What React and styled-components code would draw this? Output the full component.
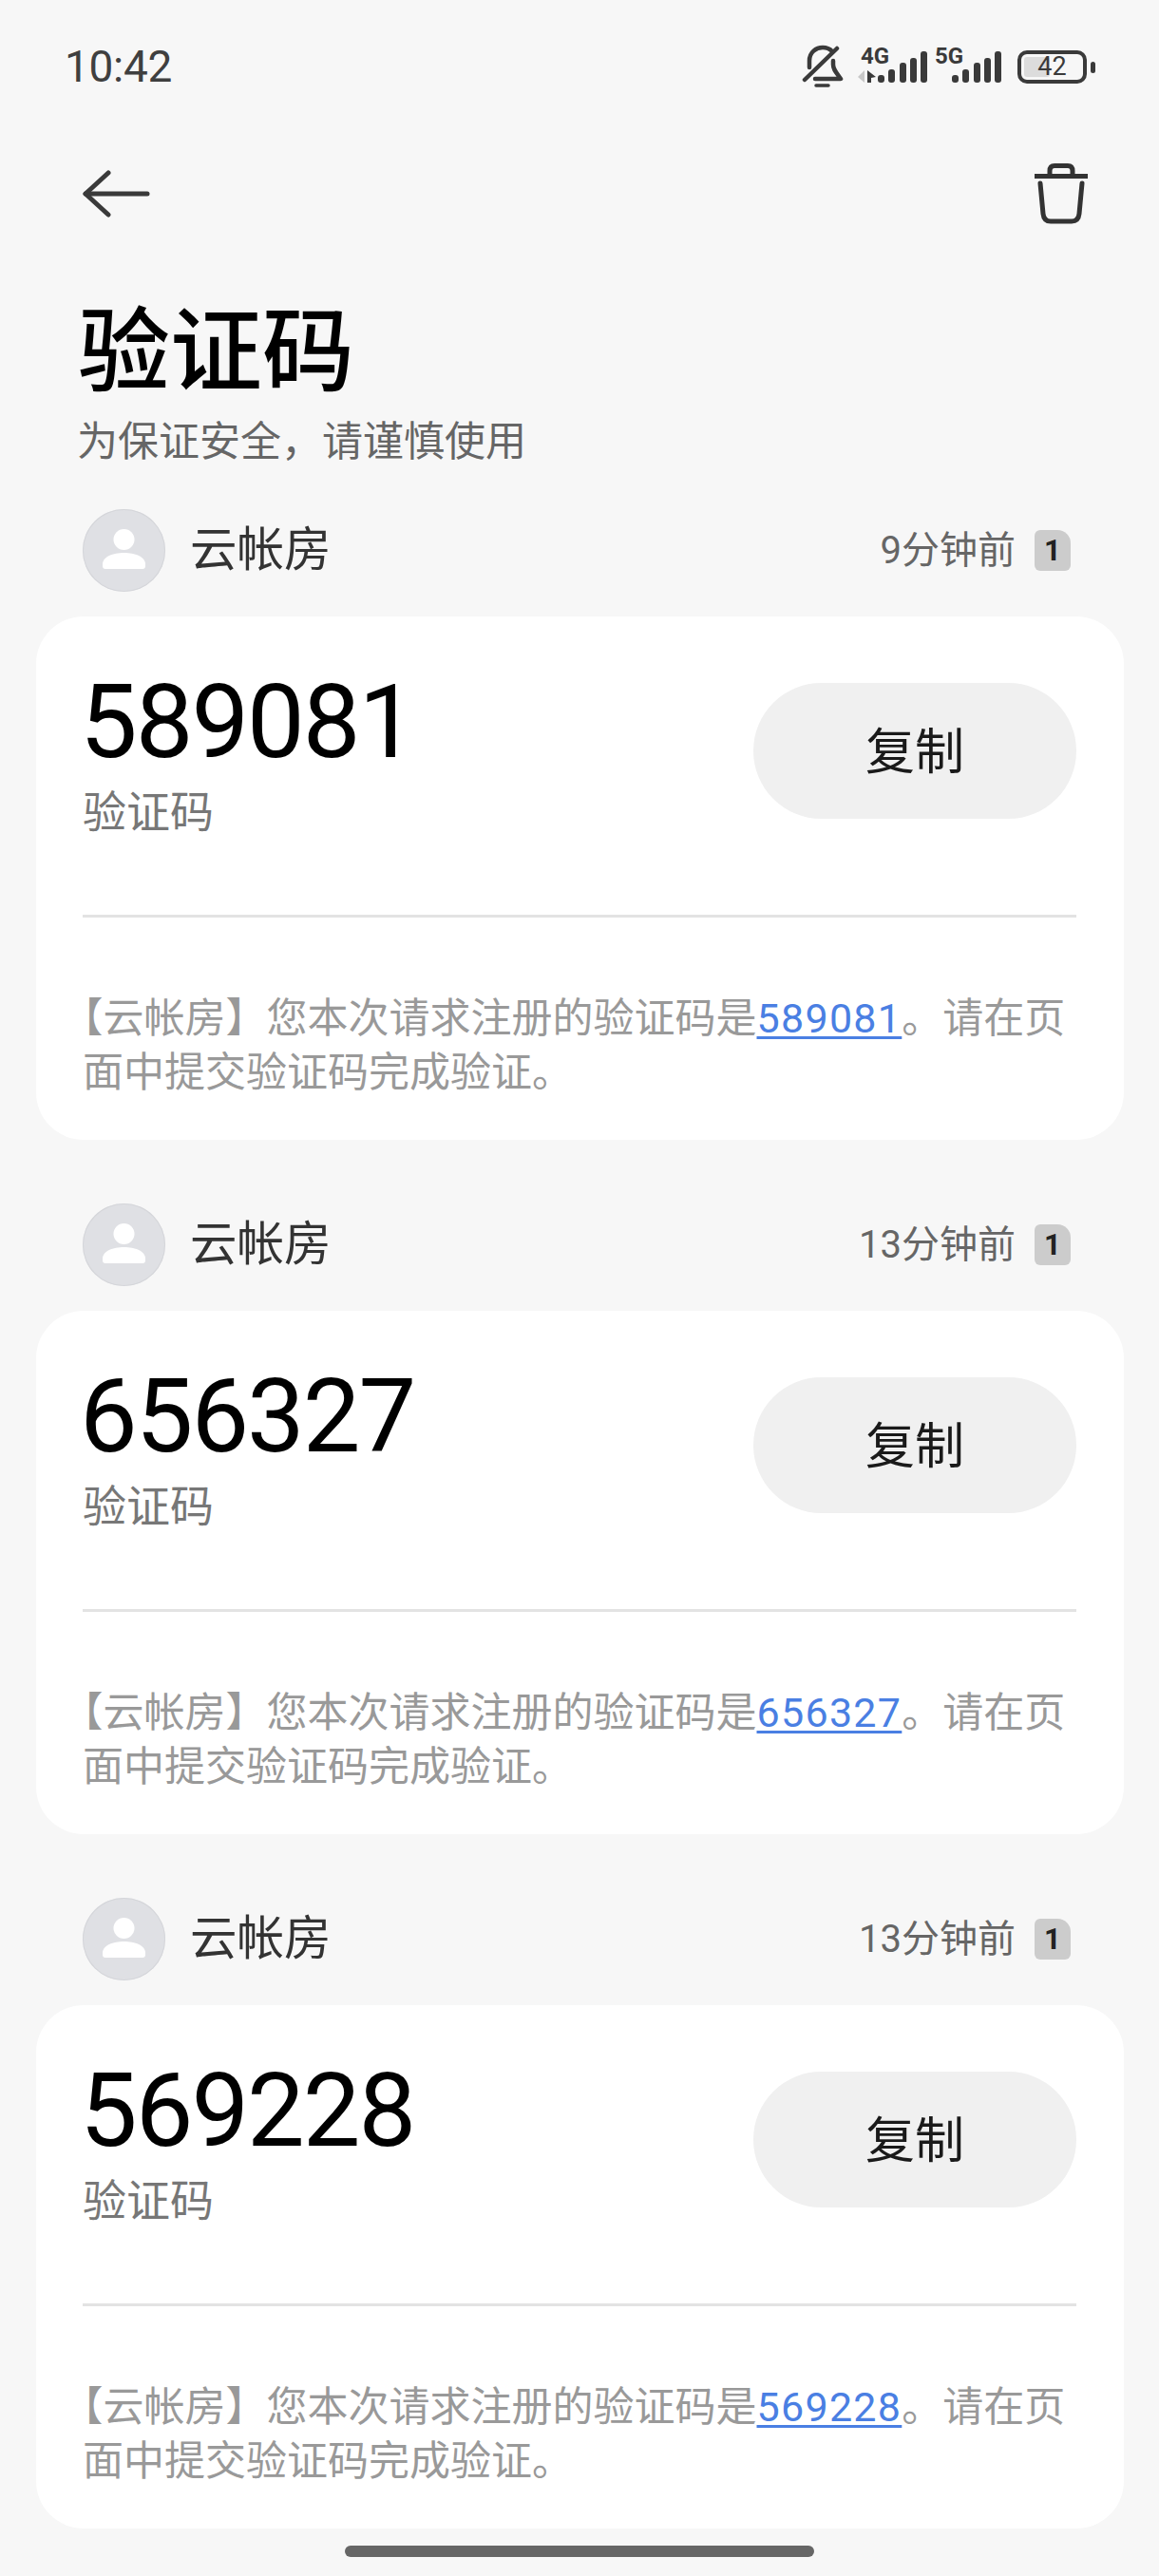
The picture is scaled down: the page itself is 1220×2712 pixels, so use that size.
import React from 'react'
import styled, { createGlobalStyle } from 'styled-components'

const GlobalStyle = createGlobalStyle`
  html, body { margin: 0; padding: 0; background: #f7f7f7; }
  body { font-family: Roboto, "Noto Sans CJK SC", sans-serif; }
`

const messages = [
  { code: '589081', time: '9分钟前' },
  { code: '656327', time: '13分钟前' },
  { code: '569228', time: '13分钟前' },
]

const BellOff = () => (
  <svg width="44" height="46" viewBox="0 0 44 46" fill="none" stroke="#3a3a3a" strokeWidth="4.5" strokeLinecap="round" strokeLinejoin="round">
    <path d="M8 24 V17 C8 8 15 3 22 3 C26 3 29 4 32 7" />
    <path d="M3 37 L37 4" />
    <path d="M33 17 V21 C33 26 36 29 41 36 H14" />
    <path d="M15 43 H28" strokeWidth="3.5" />
  </svg>
)

const Signal = ({ label, arrows }) => (
  <svg width="76" height="44" viewBox="0 0 76 44" overflow="visible">
    <text x="6" y="19" fontFamily="Roboto, sans-serif" fontWeight="700" fontSize="24" fill="#3a3a3a">{label}</text>
    {arrows && (
      <>
        <path d="M10 26 L3 33 L10 39 Z" fill="#c8c8c8" />
        <path d="M13 26 L22 33 L17 34 V39 H13 Z" fill="#3a3a3a" />
      </>
    )}
    <rect x="24" y="31" width="7" height="8" rx="3" fill="#3a3a3a" />
    <rect x="35" y="25" width="7" height="14" rx="3" fill="#3a3a3a" />
    <rect x="47" y="18" width="7" height="21" rx="3" fill="#3a3a3a" />
    <rect x="58" y="13" width="7" height="26" rx="3" fill="#3a3a3a" />
    <rect x="69" y="6" width="7" height="33" rx="3" fill="#3a3a3a" />
  </svg>
)

const BackArrow = () => (
  <svg width="74" height="50" viewBox="0 0 74 50" fill="none" stroke="#3a3a3a" strokeWidth="5" strokeLinecap="round" strokeLinejoin="round">
    <path d="M27 3 L3 25 L27 47" />
    <path d="M3 25 H68" />
  </svg>
)

const Trash = () => (
  <svg width="58" height="64" viewBox="0 0 58 64" fill="none" stroke="#333" strokeWidth="5" strokeLinejoin="round">
    <path d="M1 13.5 H57" />
    <path d="M17 13 V8 C17 4 19 2.5 22 2.5 H36 C39 2.5 41 4 41 8 V13" />
    <path d="M7 21 L10 53 C10.5 58 13 61 18 61 H40 C45 61 47.500 58 48 53 L51 21" strokeLinecap="round" />
  </svg>
)

const Person = () => (
  <svg width="87" height="87" viewBox="0 0 87 87" fill="#fff">
    <circle cx="43.500" cy="32" r="11" />
    <path d="M21 58 C21 50 32 46 43.500 46 C55 46 66 50 66 58 V60 C66 62 65 63 63 63 H24 C22 63 21 62 21 60 Z" />
  </svg>
)

const App = () => (
  <Page>
    <GlobalStyle />
    <StatusBar>
      <Clock>10:42</Clock>
      <StatusIcons>
        <BellWrap><BellOff /></BellWrap>
        <Signal label="4G" arrows />
        <Signal label="5G" />
        <Battery>
          <BatteryFill />
          <BatteryText>42</BatteryText>
          <BatteryNub />
        </Battery>
      </StatusIcons>
    </StatusBar>
    <NavBar>
      <BackArrow />
      <Trash />
    </NavBar>
    <Title>验证码</Title>
    <Subtitle>为保证安全，请谨慎使用</Subtitle>
    {messages.map((m) => (
      <Group key={m.code}>
        <SenderRow>
          <Avatar><Person /></Avatar>
          <SenderName>云帐房</SenderName>
          <TimeAgo>{m.time}</TimeAgo>
          <SimBadge>1</SimBadge>
        </SenderRow>
        <Card>
          <CodeRow>
            <div>
              <Code>{m.code}</Code>
              <CodeLabel>验证码</CodeLabel>
            </div>
            <CopyButton>复制</CopyButton>
          </CodeRow>
          <Divider />
          <Message>
            【云帐房】您本次请求注册的验证码是<CodeLink>{m.code}</CodeLink>。请在页面中提交验证码完成验证。
          </Message>
        </Card>
      </Group>
    ))}
    <HomeBar />
  </Page>
)

const Page = styled.div`
  width: 1220px;
  height: 2712px;
  background: #f7f7f7;
  overflow: hidden;
  position: relative;
`

const StatusBar = styled.div`
  height: 140px;
  padding: 0 68px;
  box-sizing: border-box;
  display: flex;
  justify-content: space-between;
  align-items: center;
`

const Clock = styled.div`
  font-size: 46px;
  color: #3f3f3f;
  letter-spacing: -0.3px;
`

const StatusIcons = styled.div`
  display: flex;
  align-items: center;
  gap: 2px;
`

const BellWrap = styled.div`
  display: flex;
  margin-right: 10px;
`

const Battery = styled.div`
  position: relative;
  width: 73px;
  height: 35px;
  margin-left: 15px;
  margin-right: 8px;
  border: 4px solid #3a3a3a;
  border-radius: 10px;
  box-sizing: border-box;
  display: flex;
  align-items: center;
  justify-content: center;
`

const BatteryFill = styled.div`
  position: absolute;
  left: 3px;
  top: 3px;
  bottom: 3px;
  width: 27px;
  background: #dcdcdc;
  border-radius: 3px;
`

const BatteryText = styled.span`
  position: relative;
  font-size: 27px;
  color: #3a3a3a;
  line-height: 1;
`

const BatteryNub = styled.div`
  position: absolute;
  right: -13px;
  top: 8px;
  width: 5px;
  height: 12px;
  border-radius: 3px;
  background: #3a3a3a;
`

const NavBar = styled.div`
  height: 128px;
  padding: 0 74px 0 87px;
  display: flex;
  justify-content: space-between;
  align-items: center;
`

const Title = styled.h1`
  margin: 43px 0 0;
  padding-left: 82px;
  font-size: 97px;
  line-height: 120px;
  font-weight: 500;
  color: #000;
`

const Subtitle = styled.div`
  padding-left: 81px;
  margin-top: 4px;
  font-size: 43px;
  line-height: 60px;
  color: #666;
`

const Group = styled.section`
  margin-top: 67px;
  &:first-of-type {
    margin-top: 41px;
  }
`

const SenderRow = styled.div`
  height: 87px;
  padding: 0 93px 0 87px;
  display: flex;
  align-items: center;
`

const Avatar = styled.div`
  width: 87px;
  height: 87px;
  border-radius: 50%;
  background: #dfe0e4;
  box-shadow: inset 0 0 0 1px #d5d6da;
  flex: none;
`

const SenderName = styled.div`
  margin: 0 0 1px 26px;
  flex: 1;
  font-size: 49.500px;
  line-height: 60px;
  color: #333;
`

const TimeAgo = styled.div`
  font-size: 40px;
  line-height: 50px;
  color: #666;
`

const SimBadge = styled.div`
  width: 38px;
  height: 43px;
  margin: 0 0 1px 20px;
  background: #ccc;
  border-radius: 6px 14px 6px 6px;
  display: flex;
  align-items: center;
  justify-content: center;
  font-size: 31px;
  font-weight: 700;
  color: #222;
`

const Card = styled.div`
  margin: 26px 37px 0 38px;
  height: 551px;
  background: #fff;
  border-radius: 50px;
  padding: 0 50px 0 49px;
  box-sizing: border-box;
`

const CodeRow = styled.div`
  height: 314px;
  display: flex;
  justify-content: space-between;
  padding-top: 57px;
  box-sizing: border-box;
`

const Code = styled.div`
  font-size: 108px;
  line-height: 108px;
  letter-spacing: -2px;
  margin-left: -3px;
  color: #000;
`

const CodeLabel = styled.div`
  margin-top: 11px;
  font-size: 46px;
  line-height: 60px;
  color: #777;
`

const CopyButton = styled.button`
  width: 340px;
  height: 143px;
  margin-top: 13px;
  padding: 0 0 6px;
  border: none;
  border-radius: 72px;
  background: #f0f0f0;
  font-family: inherit;
  font-size: 52px;
  color: #1a1a1a;
`

const Divider = styled.div`
  height: 3px;
  background: #e3e3e3;
`

const Message = styled.p`
  margin: 78px 0 0;
  font-size: 43px;
  line-height: 57px;
  color: #999;
  text-spacing-trim: trim-start;
`

const CodeLink = styled.span`
  color: #4a7fe3;
  text-decoration: underline;
  text-underline-offset: 4px;
  text-decoration-thickness: 3px;
  letter-spacing: 1.300px;
`

const HomeBar = styled.div`
  position: absolute;
  left: 363px;
  top: 2680px;
  width: 494px;
  height: 12px;
  border-radius: 6px;
  background: #666;
`

export default App
